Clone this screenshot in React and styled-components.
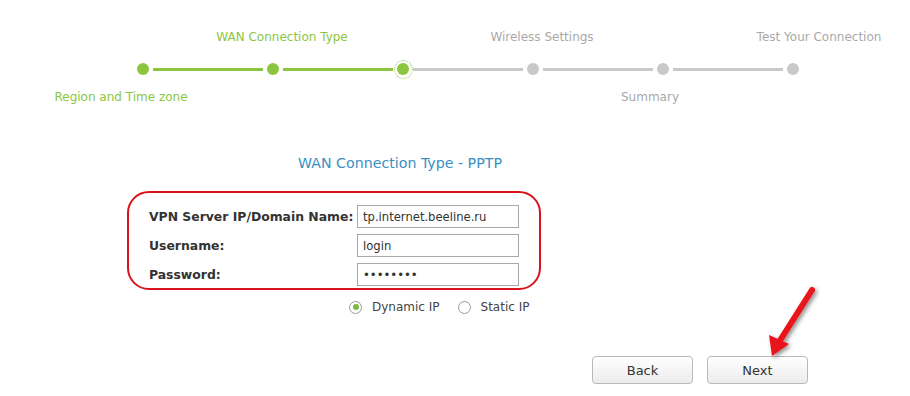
import React from "react";
import styled, { createGlobalStyle } from "styled-components";

const Global = createGlobalStyle`
  html, body { margin: 0; padding: 0; background: #fff; }
  body { font-family: "DejaVu Sans", Tahoma, sans-serif; color: #333; }
`;

const GREEN = "#8cc63f";
const GRAY = "#c9c9c9";

const Page = styled.div`
  position: relative;
  width: 910px;
  height: 396px;
  overflow: hidden;
`;

const LabelRow = styled.div`
  display: grid;
  grid-template-columns: repeat(6, 130px);
  padding-left: 78px;
  box-sizing: border-box;
  height: ${(p) => p.$h}px;
  padding-bottom: ${(p) => p.$pb || 0}px;
  align-items: ${(p) => p.$align};
`;

const StepLabel = styled.div`
  grid-column: ${(p) => p.$col};
  display: flex;
  justify-content: center;
  white-space: nowrap;
  font-size: 12px;
  line-height: 15px;
  color: ${(p) => (p.$done ? GREEN : "#a9a9a9")};
  transform: translateX(${(p) => p.$shift}px);
`;

const Track = styled.div`
  display: flex;
  align-items: center;
  padding-left: 133px;
  height: 20px;
`;

const DotBox = styled.div`
  width: 20px;
  height: 20px;
  display: flex;
  align-items: center;
  justify-content: center;
  flex: none;
`;

const Dot = styled.div`
  width: 12px;
  height: 12px;
  border-radius: 50%;
  background: ${(p) => (p.$done ? GREEN : GRAY)};
`;

const Ring = styled.div`
  width: 19px;
  height: 19px;
  border-radius: 50%;
  border: 1.5px dotted ${GREEN};
  box-sizing: border-box;
  display: flex;
  align-items: center;
  justify-content: center;
`;

const Segment = styled.div`
  width: 110px;
  height: 3px;
  flex: none;
  background: ${(p) => (p.$done ? GREEN : GRAY)};
`;

const Heading = styled.div`
  text-align: center;
  font-size: 14.2px;
  line-height: 18px;
  color: #3a8fc2;
  margin-top: 39px;
  width: 800px;
`;

const FormArea = styled.div`
  display: flex;
  flex-direction: column;
  margin-left: 127px;
  margin-top: 19px;
`;

const RedBox = styled.div`
  display: grid;
  grid-template-columns: 208px 162px;
  grid-auto-rows: 23px;
  row-gap: 6px;
  align-items: center;
  box-sizing: border-box;
  width: 414px;
  height: 99px;
  border: 2px solid #d9141c;
  border-radius: 22px;
  padding: 12px 0 0 20px;
`;

const FieldLabel = styled.label`
  font-weight: bold;
  font-size: 12.4px;
  color: #333;
  white-space: nowrap;
`;

const Input = styled.input`
  width: 162px;
  height: 23px;
  box-sizing: border-box;
  border: 1px solid #a9a9a9;
  padding: 0 5px;
  font-family: "DejaVu Sans", Tahoma, sans-serif;
  font-size: 11.6px;
  color: #333;
  outline: none;
  background: #fff;
`;

const RadioRow = styled.div`
  display: flex;
  align-items: center;
  margin-left: 222px;
  margin-top: 9px;
  height: 16px;
  gap: 18px;
`;

const RadioItem = styled.div`
  display: flex;
  align-items: center;
  gap: 10px;
  font-size: 12px;
  color: #444;
  white-space: nowrap;
`;

const RadioCircle = styled.span`
  width: 11px;
  height: 11px;
  border-radius: 50%;
  border: 1px solid #9a9a9a;
  background: #fff;
  display: flex;
  align-items: center;
  justify-content: center;
  &::after {
    content: "";
    width: 6px;
    height: 6px;
    border-radius: 50%;
    background: ${(p) => (p.$on ? "#7fb843" : "transparent")};
  }
`;

const ButtonRow = styled.div`
  display: flex;
  gap: 14px;
  margin-left: 592px;
  margin-top: 41px;
`;

const Button = styled.button`
  width: 101px;
  height: 28px;
  border: 1px solid #b9b9b9;
  border-radius: 4px;
  background: linear-gradient(#ffffff, #ececec);
  font-family: "DejaVu Sans", Tahoma, sans-serif;
  font-size: 13px;
  color: #333;
  padding: 0;
`;

const Arrow = styled.svg`
  position: absolute;
  left: 755px;
  top: 280px;
  overflow: visible;
`;

const steps = [
  { label: "Region and Time zone", pos: "bottom", shift: -22 },
  { label: "WAN Connection Type", pos: "top", shift: 9 },
  { label: "", pos: "bottom", shift: 0, hidden: true },
  { label: "Wireless Settings", pos: "top", shift: 9 },
  { label: "Summary", pos: "bottom", shift: -13 },
  { label: "Test Your Connection", pos: "top", shift: 26 },
];
const CURRENT = 2;

export default function App() {
  return (
    <Page>
      <Global />
      <LabelRow $h={59} $pb={14} $align="end">
        {steps.map((s, i) =>
          s.pos === "top" ? (
            <StepLabel key={i} $col={i + 1} $done={i <= CURRENT} $shift={s.shift}>
              {s.label}
            </StepLabel>
          ) : null
        )}
      </LabelRow>
      <Track>
        {steps.map((s, i) => (
          <React.Fragment key={i}>
            {i > 0 && <Segment $done={i <= CURRENT} />}
            <DotBox>
              {i === CURRENT ? (
                <Ring>
                  <Dot $done />
                </Ring>
              ) : (
                <Dot $done={i <= CURRENT} />
              )}
            </DotBox>
          </React.Fragment>
        ))}
      </Track>
      <LabelRow $h={36} $align="center">
        {steps.map((s, i) =>
          s.pos === "bottom" && !s.hidden ? (
            <StepLabel key={i} $col={i + 1} $done={i <= CURRENT} $shift={s.shift}>
              {s.label}
            </StepLabel>
          ) : null
        )}
      </LabelRow>
      <Heading>WAN Connection Type - PPTP</Heading>
      <FormArea>
        <RedBox>
          <FieldLabel>VPN Server IP/Domain Name:</FieldLabel>
          <Input defaultValue="tp.internet.beeline.ru" />
          <FieldLabel>Username:</FieldLabel>
          <Input defaultValue="login" />
          <FieldLabel>Password:</FieldLabel>
          <Input type="password" defaultValue="password" />
        </RedBox>
        <RadioRow>
          <RadioItem>
            <RadioCircle $on />
            Dynamic IP
          </RadioItem>
          <RadioItem>
            <RadioCircle />
            Static IP
          </RadioItem>
        </RadioRow>
      </FormArea>
      <ButtonRow>
        <Button>Back</Button>
        <Button>Next</Button>
      </ButtonRow>
      <Arrow width="70" height="90" viewBox="0 0 70 90">
        <defs>
          <filter id="sh" x="-50%" y="-50%" width="200%" height="200%">
            <feDropShadow dx="2" dy="2" stdDeviation="2" floodColor="#000" floodOpacity="0.45" />
          </filter>
        </defs>
        <g filter="url(#sh)">
          <line x1="57" y1="10" x2="24" y2="62" stroke="#e8141c" strokeWidth="6" strokeLinecap="round" />
          <polygon points="17,76 14,55 34,64" fill="#e8141c" />
        </g>
      </Arrow>
    </Page>
  );
}
